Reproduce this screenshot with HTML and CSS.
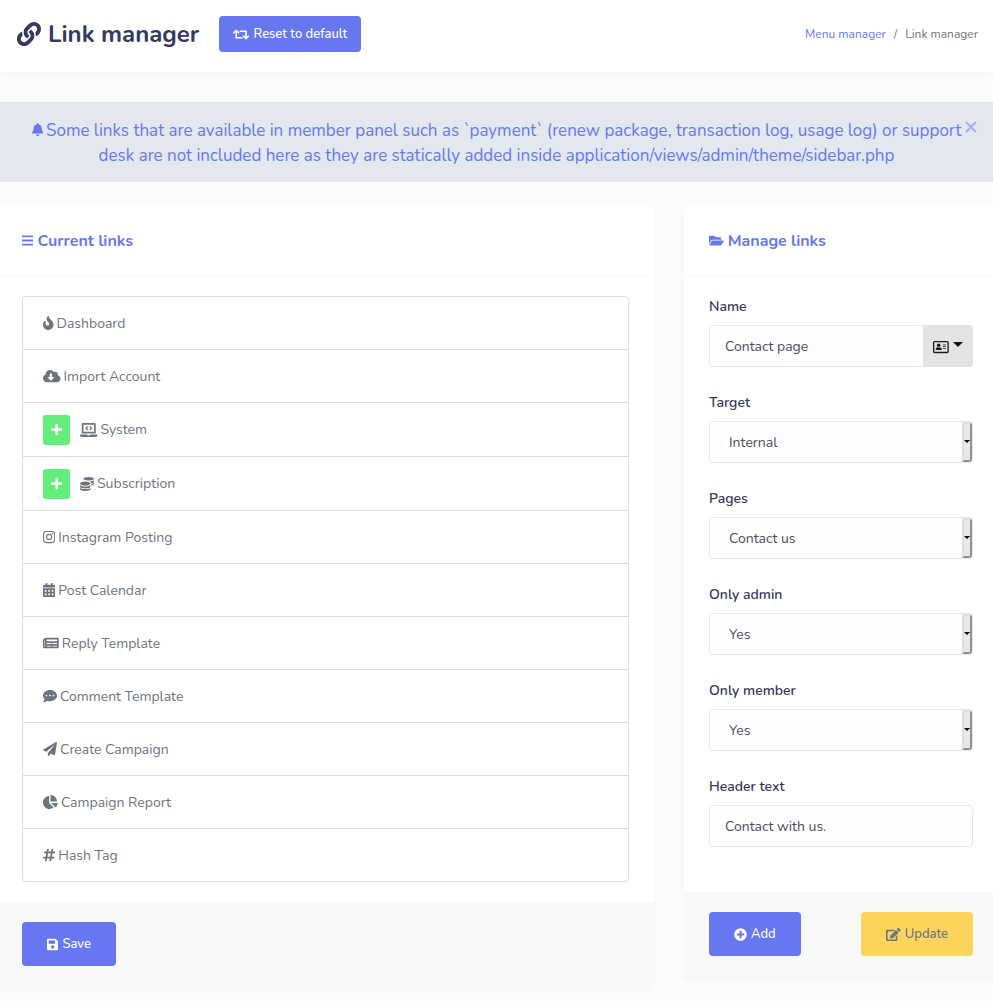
FILE: index.html
```html
<!DOCTYPE html>
<html lang="en">
<head>
<meta charset="utf-8">
<meta name="viewport" content="width=device-width, initial-scale=1">
<title>Link manager</title>
<link rel="stylesheet" href="styles.css">
</head>
<body>
<header class="page-header">
  <h1 class="page-title"><svg class="icon" viewBox="0 0 512 512" aria-hidden="true"><path d="M326.612 185.391c59.747 59.809 58.927 155.698.36 214.59-.11.12-.24.25-.36.37l-67.2 67.2c-59.27 59.27-155.699 59.262-214.96 0-59.27-59.26-59.27-155.7 0-214.96l37.106-37.106c9.84-9.84 26.786-3.3 27.294 10.606.648 17.722 3.826 35.527 9.69 52.721 1.986 5.822.567 12.262-3.783 16.612l-13.087 13.087c-28.026 28.026-28.905 73.66-1.155 101.96 28.024 28.579 74.086 28.749 102.325.51l67.2-67.19c28.191-28.191 28.073-73.757 0-101.83-3.701-3.694-7.429-6.564-10.341-8.569a16.037 16.037 0 0 1-6.947-12.606c-.396-10.567 3.348-21.456 11.698-29.806l21.054-21.055c5.521-5.521 14.182-6.199 20.584-1.731a152.482 152.482 0 0 1 20.522 17.197zM467.547 44.449c-59.261-59.262-155.69-59.27-214.96 0l-67.2 67.2c-.12.12-.25.25-.36.37-58.566 58.892-59.387 154.781.36 214.59a152.454 152.454 0 0 0 20.521 17.196c6.402 4.468 15.064 3.789 20.584-1.731l21.054-21.055c8.35-8.35 12.094-19.239 11.698-29.806a16.037 16.037 0 0 0-6.947-12.606c-2.912-2.005-6.64-4.875-10.341-8.569-28.073-28.073-28.191-73.639 0-101.83l67.2-67.19c28.239-28.239 74.3-28.069 102.325.51 27.75 28.3 26.872 73.934-1.155 101.96l-13.087 13.087c-4.35 4.35-5.769 10.79-3.783 16.612 5.864 17.194 9.042 34.999 9.69 52.721.509 13.906 17.454 20.446 27.294 10.606l37.106-37.106c59.271-59.259 59.271-155.699.001-214.959z"/></svg>Link manager</h1>
  <button class="btn btn-primary btn-reset" type="button"><svg class="icon" viewBox="0 0 640 512" aria-hidden="true"><path d="M629.657 343.598L528.971 444.284c-9.373 9.372-24.568 9.372-33.941 0L394.343 343.598c-9.373-9.373-9.373-24.569 0-33.941l10.823-10.823c9.562-9.562 25.133-9.34 34.419.492L480 342.118V160H292.451a24.005 24.005 0 0 1-16.971-7.029l-16-16C244.361 121.851 255.069 96 276.451 96H520c13.255 0 24 10.745 24 24v222.118l40.416-42.792c9.285-9.831 24.856-10.054 34.419-.492l10.823 10.823c9.372 9.372 9.372 24.569-.001 33.941zm-265.138 15.431A23.999 23.999 0 0 0 347.548 352H160V169.881l40.416 42.792c9.286 9.831 24.856 10.054 34.419.491l10.822-10.822c9.373-9.373 9.373-24.569 0-33.941L144.971 67.716c-9.373-9.373-24.569-9.373-33.941 0L10.343 168.402c-9.373 9.373-9.373 24.569 0 33.941l10.822 10.822c9.562 9.562 25.133 9.34 34.419-.491L96 169.881V392c0 13.255 10.745 24 24 24h243.549c21.382 0 32.09-25.851 16.971-40.971l-16.001-16z"/></svg>Reset to default</button>
  <nav class="breadcrumb" aria-label="Breadcrumb"><a href="#">Menu manager</a><span>/</span><span>Link manager</span></nav>
</header>

<main>
  <div class="alert" role="alert">
    <p class="alert-text"><svg class="icon" viewBox="0 0 448 512" aria-hidden="true"><path d="M224 512c35.32 0 63.97-28.65 63.97-64H160.03c0 35.35 28.65 64 63.97 64zm215.39-149.71c-19.32-20.76-55.47-51.99-55.47-154.29 0-77.7-54.48-139.9-127.94-155.16V32c0-17.67-14.32-32-31.98-32s-31.98 14.33-31.98 32v20.84C118.56 68.1 64.08 130.3 64.08 208c0 102.3-36.15 133.53-55.47 154.29-6 6.45-8.66 14.16-8.61 21.71.11 16.4 12.98 32 32.1 32h383.8c19.12 0 32-15.6 32.1-32 .05-7.55-2.61-15.27-8.61-21.71z"/></svg>Some links that are available in member panel such as `payment` (renew package, transaction log, usage log) or support desk are not included here as they are statically added inside application/views/admin/theme/sidebar.php</p>
    <button class="alert-close" type="button" aria-label="Close"><svg viewBox="0 0 12 12" aria-hidden="true"><path d="M1 1l10 10M11 1L1 11"/></svg></button>
  </div>

  <div class="columns">
    <section class="card">
      <h2 class="card-title"><svg class="icon" viewBox="0 0 448 512" aria-hidden="true"><path d="M16 132h416c9 0 16-7 16-16V76c0-9-7-16-16-16H16C7 60 0 67 0 76v40c0 9 7 16 16 16zm0 160h416c9 0 16-7 16-16v-40c0-9-7-16-16-16H16c-9 0-16 7-16 16v40c0 9 7 16 16 16zm0 160h416c9 0 16-7 16-16v-40c0-9-7-16-16-16H16c-9 0-16 7-16 16v40c0 9 7 16 16 16z"/></svg>Current links</h2>
      <div class="card-body">
        <ul class="links">
          <li><svg class="icon" viewBox="0 0 384 512" aria-hidden="true"><path d="M216 23.858c0-23.802-30.653-32.765-44.149-13.038C48 191.851 224 200 224 288c0 35.629-29.114 64.458-64.85 63.994C123.98 351.538 96 322.22 96 287.046v-85.51c0-21.703-26.471-32.225-41.432-16.504C27.801 213.158 0 261.332 0 320c0 105.869 86.131 192 192 192s192-86.131 192-192c0-170.29-168-193.003-168-296.142z"/></svg>Dashboard</li>
          <li><svg class="icon" viewBox="0 0 640 512" aria-hidden="true"><path d="M537.6 226.6c4.1-10.7 6.4-22.4 6.4-34.6 0-53-43-96-96-96-19.7 0-38.1 6-53.3 16.2C367 64.2 315.3 32 256 32c-88.4 0-160 71.6-160 160 0 2.7.1 5.4.2 8.1C40.2 219.8 0 273.2 0 336c0 79.5 64.5 144 144 144h368c70.7 0 128-57.3 128-128 0-61.9-44-113.6-102.4-125.4zm-132.9 88.7L299.3 420.7c-6.2 6.2-16.4 6.2-22.6 0L171.3 315.3c-10.1-10.1-2.9-27.3 11.3-27.3H248V176c0-8.8 7.2-16 16-16h48c8.8 0 16 7.2 16 16v112h65.4c14.2 0 21.4 17.2 11.3 27.3z"/></svg>Import Account</li>
          <li class="has-children"><button class="expand" type="button" aria-label="Expand System"><svg class="icon" viewBox="0 0 448 512" aria-hidden="true"><path d="M416 208H272V64c0-17.67-14.33-32-32-32h-32c-17.67 0-32 14.33-32 32v144H32c-17.67 0-32 14.33-32 32v32c0 17.67 14.33 32 32 32h144v144c0 17.67 14.33 32 32 32h32c17.67 0 32-14.33 32-32V304h144c17.67 0 32-14.33 32-32v-32c0-17.67-14.33-32-32-32z"/></svg></button><svg class="icon" viewBox="0 0 640 512" aria-hidden="true"><path d="M255.03 261.65c6.25 6.25 16.38 6.25 22.63 0l11.31-11.31c6.25-6.25 6.25-16.38 0-22.63L253.25 192l35.71-35.72c6.25-6.25 6.25-16.38 0-22.63l-11.31-11.31c-6.25-6.25-16.38-6.25-22.63 0l-58.34 58.34c-6.25 6.25-6.25 16.38 0 22.63l58.35 58.34zm96.01-11.3l11.31 11.31c6.25 6.25 16.38 6.25 22.63 0l58.34-58.34c6.25-6.25 6.25-16.38 0-22.63l-58.34-58.34c-6.25-6.25-16.38-6.25-22.63 0l-11.31 11.31c-6.25 6.25-6.25 16.38 0 22.63L386.75 192l-35.71 35.72c-6.25 6.25-6.25 16.38 0 22.63zM624 416H381.54c-.74 19.81-14.71 32-32.74 32H288c-18.69 0-33.02-17.47-32.77-32H16c-8.8 0-16 7.2-16 16v16c0 35.2 28.8 64 64 64h512c35.2 0 64-28.8 64-64v-16c0-8.8-7.2-16-16-16zM576 48c0-26.4-21.6-48-48-48H112C85.6 0 64 21.6 64 48v336h512V48zm-64 272H128V64h384v256z"/></svg>System</li>
          <li class="has-children"><button class="expand" type="button" aria-label="Expand Subscription"><svg class="icon" viewBox="0 0 448 512" aria-hidden="true"><path d="M416 208H272V64c0-17.67-14.33-32-32-32h-32c-17.67 0-32 14.33-32 32v144H32c-17.67 0-32 14.33-32 32v32c0 17.67 14.33 32 32 32h144v144c0 17.67 14.33 32 32 32h32c17.67 0 32-14.33 32-32V304h144c17.67 0 32-14.33 32-32v-32c0-17.67-14.33-32-32-32z"/></svg></button><svg class="icon" viewBox="0 0 512 512" aria-hidden="true"><path d="M0 405.3V448c0 35.3 86 64 192 64s192-28.7 192-64v-42.7C342.7 434.4 267.2 448 192 448S41.3 434.4 0 405.3zM320 128c106 0 192-28.7 192-64S426 0 320 0 128 28.7 128 64s86 64 192 64zM0 300.4V352c0 35.3 86 64 192 64s192-28.7 192-64v-51.6c-41.3 34-116.9 51.6-192 51.6S41.3 334.4 0 300.4zm416 11c57.3-11.1 96-31.7 96-55.4v-42.7c-23.2 16.4-57.3 27.6-96 34.5v63.6zM192 160C86 160 0 195.8 0 240s86 80 192 80 192-35.8 192-80-86-80-192-80zm219.3 56.3c60-10.8 100.7-32 100.7-56.3v-42.7c-35.5 25.1-96.5 38.6-160.7 41.8 29.5 14.3 51.2 33.5 60 57.2z"/></svg>Subscription</li>
          <li><svg class="icon" viewBox="0 0 448 512" aria-hidden="true"><rect x="20" y="52" width="408" height="408" rx="112" fill="none" stroke="currentColor" stroke-width="40"/><circle cx="224" cy="256" r="95" fill="none" stroke="currentColor" stroke-width="40"/><circle cx="344" cy="136" r="27"/></svg>Instagram Posting</li>
          <li><svg class="icon" viewBox="0 0 448 512" aria-hidden="true"><path fill-rule="evenodd" d="M0 464c0 26.5 21.5 48 48 48h352c26.5 0 48-21.5 48-48V192H0v272zM64 256h64v64H64zM192 256h64v64h-64zM320 256h64v64h-64zM64 384h64v64H64zM192 384h64v64h-64zM320 384h64v64h-64zM400 64h-48V16c0-8.8-7.2-16-16-16h-32c-8.8 0-16 7.2-16 16v48H160V16c0-8.8-7.2-16-16-16h-32c-8.8 0-16 7.2-16 16v48H48C21.5 64 0 85.5 0 112v48h448v-48c0-26.5-21.5-48-48-48z"/></svg>Post Calendar</li>
          <li><svg class="icon" viewBox="0 0 576 512" aria-hidden="true"><path fill-rule="evenodd" d="M552 64H88c-13.255 0-24 10.745-24 24v8H24c-13.255 0-24 10.745-24 24v272c0 30.928 25.072 56 56 56h472c26.51 0 48-21.49 48-48V88c0-13.255-10.745-24-24-24zM56 400a8 8 0 0 1-8-8V144h16v248a8 8 0 0 1-8 8zM128 352h176v32H128zM336 352h176v32H336zM128 256h176v32H128zM336 256h176v32H336zM128 128h384v64H128z"/></svg>Reply Template</li>
          <li><svg class="icon" viewBox="0 0 512 512" aria-hidden="true"><path d="M256 32C114.6 32 0 125.1 0 240c0 49.6 21.4 95 57 130.7C44.5 421.1 2.7 466 2.2 466.5c-2.2 2.3-2.8 5.7-1.5 8.7S4.8 480 8 480c66.3 0 116-31.8 140.6-51.4 32.7 12.3 69 19.4 107.4 19.4 141.4 0 256-93.1 256-208S397.4 32 256 32zM128 272c-17.7 0-32-14.3-32-32s14.3-32 32-32 32 14.3 32 32-14.3 32-32 32zm128 0c-17.7 0-32-14.3-32-32s14.3-32 32-32 32 14.3 32 32-14.3 32-32 32zm128 0c-17.7 0-32-14.3-32-32s14.3-32 32-32 32 14.3 32 32-14.3 32-32 32z"/></svg>Comment Template</li>
          <li><svg class="icon" viewBox="0 0 512 512" aria-hidden="true"><path d="M476 3.2L12.5 270.6c-18.1 10.4-15.8 35.6 2.2 43.2L121 358.4l287.3-253.2c5.5-4.9 13.3 2.6 8.6 8.3L176 407v80.5c0 23.6 28.5 32.9 42.5 15.8L282 426l124.6 52.2c14.2 6 30.4-2.9 33-18.2l72-432C515 7.8 493.3-6.8 476 3.2z"/></svg>Create Campaign</li>
          <li><svg class="icon" viewBox="0 0 544 512" aria-hidden="true"><path d="M527.79 288H290.5l158.03 158.03c6.04 6.04 15.98 6.53 22.19.68 38.7-36.46 65.32-85.61 73.13-140.86 1.34-9.46-6.51-17.85-16.06-17.85zm-15.83-64.8C503.72 103.74 408.26 8.28 288.8.04 279.68-.59 272 7.1 272 16.24V240h223.77c9.14 0 16.82-7.68 16.19-16.8zM224 288V50.71c0-9.55-8.39-17.4-17.84-16.06C86.99 51.49-4.1 155.6.14 280.37 4.5 408.51 114.83 513.59 243.03 511.98c50.4-.63 96.97-16.87 135.26-44.03 7.9-5.6 8.42-17.23 1.57-24.08L224 288z"/></svg>Campaign Report</li>
          <li><svg class="icon" viewBox="0 0 448 512" aria-hidden="true"><path d="M440.667 182.109l7.143-40c1.313-7.355-4.342-14.109-11.813-14.109h-74.81l14.623-81.891C377.123 38.754 371.468 32 363.997 32h-40.632a12 12 0 0 0-11.813 9.891L296.175 128H197.54l14.623-81.891C213.477 38.754 207.822 32 200.35 32h-40.632a12 12 0 0 0-11.813 9.891L132.528 128H53.432a12 12 0 0 0-11.813 9.891l-7.143 40C33.163 185.246 38.818 192 46.289 192h74.81L98.242 320H19.146a12 12 0 0 0-11.813 9.891l-7.143 40C-1.123 377.246 4.532 384 12.003 384h74.81L72.19 465.891C70.877 473.246 76.532 480 84.003 480h40.632a12 12 0 0 0 11.813-9.891L151.826 384h98.634l-14.623 81.891C234.523 473.246 240.178 480 247.65 480h40.632a12 12 0 0 0 11.813-9.891L315.472 384h79.096a12 12 0 0 0 11.813-9.891l7.143-40c1.313-7.355-4.342-14.109-11.813-14.109h-74.81l22.857-128h79.096a12 12 0 0 0 11.813-9.891zM261.889 320h-98.634l22.857-128h98.634l-22.857 128z"/></svg>Hash Tag</li>
        </ul>
      </div>
      <footer class="card-footer">
        <button class="btn btn-primary" type="button"><svg class="icon" viewBox="0 0 448 512" aria-hidden="true"><path d="M433.941 129.941l-83.882-83.882A48 48 0 0 0 316.118 32H48C21.49 32 0 53.49 0 80v352c0 26.51 21.49 48 48 48h352c26.51 0 48-21.49 48-48V163.882a48 48 0 0 0-14.059-33.941zM224 416c-35.346 0-64-28.654-64-64 0-35.346 28.654-64 64-64s64 28.654 64 64c0 35.346-28.654 64-64 64zm96-304.52V212c0 6.627-5.373 12-12 12H76c-6.627 0-12-5.373-12-12V108c0-6.627 5.373-12 12-12h228.52c3.183 0 6.235 1.264 8.485 3.515l3.48 3.48A11.996 11.996 0 0 1 320 111.48z"/></svg>Save</button>
      </footer>
    </section>

    <form class="card">
      <h2 class="card-title"><svg class="icon" viewBox="0 0 576 512" aria-hidden="true"><path d="M572.694 292.093L500.27 416.248A63.997 63.997 0 0 1 444.989 448H45.025c-18.523 0-30.064-20.093-20.731-36.093l72.424-124.155A64 64 0 0 1 152 256h399.964c18.523 0 30.064 20.093 20.73 36.093zM152 224h328v-48c0-26.51-21.49-48-48-48H272l-64-64H48C21.49 64 0 85.49 0 112v278.046l69.077-118.418C86.214 242.25 117.989 224 152 224z"/></svg>Manage links</h2>
      <div class="card-body">
        <div class="field">
          <label for="name">Name</label>
          <div class="input-group">
            <input class="control" id="name" type="text" value="Contact page">
            <button class="picker" type="button" aria-label="Choose icon"><svg class="icon" viewBox="0 0 576 512" aria-hidden="true"><rect x="24" y="56" width="528" height="400" rx="32" fill="none" stroke="currentColor" stroke-width="48"/><circle cx="208" cy="192" r="64"/><path d="M96 345c0-48 30-77 67-77 30 12 60 12 90 0 37 0 67 29 67 77 0 14-10 23-22 23H118c-12 0-22-9-22-23zM360 160h112v32H360zM360 224h112v32H360zM360 288h112v32H360z"/></svg><span class="caret"></span></button>
          </div>
        </div>
        <div class="field">
          <label for="target">Target</label>
          <div class="select"><select class="control" id="target"><option>Internal</option><option>External</option></select></div>
        </div>
        <div class="field">
          <label for="pages">Pages</label>
          <div class="select"><select class="control" id="pages"><option>Contact us</option></select></div>
        </div>
        <div class="field">
          <label for="only-admin">Only admin</label>
          <div class="select"><select class="control" id="only-admin"><option>Yes</option><option>No</option></select></div>
        </div>
        <div class="field">
          <label for="only-member">Only member</label>
          <div class="select"><select class="control" id="only-member"><option>Yes</option><option>No</option></select></div>
        </div>
        <div class="field">
          <label for="header-text">Header text</label>
          <input class="control" id="header-text" type="text" value="Contact with us.">
        </div>
      </div>
      <footer class="card-footer">
        <button class="btn btn-primary" type="button"><svg class="icon" viewBox="0 0 512 512" aria-hidden="true"><path fill-rule="evenodd" d="M256 8a248 248 0 1 0 0 496 248 248 0 0 0 0-496zM216 112h80v104h104v80H296v104h-80V296H112v-80h104z"/></svg>Add</button>
        <button class="btn btn-warning" type="button"><svg class="icon" viewBox="0 0 576 512" aria-hidden="true"><path d="M402.6 83.2l90.2 90.2c3.8 3.8 3.8 10 0 13.8L274.4 405.6l-92.8 10.3c-12.4 1.4-22.9-9.1-21.5-21.5l10.3-92.8L388.8 83.2c3.8-3.8 10-3.8 13.8 0zm162-22.9l-48.8-48.8c-15.2-15.2-39.9-15.2-55.2 0l-35.4 35.4c-3.8 3.8-3.8 10 0 13.8l90.2 90.2c3.8 3.8 10 3.8 13.8 0l35.4-35.4c15.2-15.3 15.2-40 0-55.2zM384 346.2V448H64V128h229.8c3.2 0 6.2-1.3 8.5-3.5l40-40c7.6-7.6 2.2-20.5-8.5-20.5H48C21.5 64 0 85.5 0 112v352c0 26.5 21.5 48 48 48h352c26.5 0 48-21.5 48-48V306.2c0-10.7-12.9-16-20.5-8.5l-40 40c-2.2 2.3-3.5 5.3-3.5 8.5z"/></svg>Update</button>
      </footer>
    </form>
  </div>
</main>
</body>
</html>
```
FILE: styles.css
```css
*,
*::before,
*::after {
  box-sizing: border-box;
}

body {
  margin: 0;
  overflow-x: hidden;
  background: #fbfdfc;
  color: #6c757d;
  font: 14px/21px Nunito, Lato, "Open Sans", sans-serif;
}

h1, h2, p, ul {
  margin: 0;
  padding: 0;
}

button, input, select {
  font: inherit;
}

.icon {
  display: inline-block;
  flex: none;
  height: 1em;
  width: auto;
  fill: currentColor;
}

.page-header {
  display: flex;
  align-items: center;
  height: 72px;
  padding: 0 15px 4px 17px;
  background: #fff;
  box-shadow: 0 4px 8px rgba(0, 0, 0, .03);
}

.page-title {
  display: flex;
  align-items: center;
  gap: 7px;
  color: #34395e;
  font-size: 24px;
  line-height: 36px;
  font-weight: 700;
}

.btn {
  display: inline-flex;
  align-items: center;
  justify-content: center;
  gap: 4px;
  height: 44px;
  padding: 0 25px;
  border: 0;
  border-radius: 4px;
  font-size: 13px;
  font-weight: 500;
  cursor: pointer;
}

.btn-primary {
  background: #6777ef;
  color: #fff;
}

.btn-warning {
  background: #fcd45c;
  color: #6c757d;
}

.btn-reset {
  height: 36px;
  margin-left: 20px;
  padding: 0 14px;
}

.breadcrumb {
  display: flex;
  gap: 8px;
  margin-left: auto;
  font-size: 12px;
}

.breadcrumb a {
  color: #6777ef;
  text-decoration: none;
}

.alert {
  position: relative;
  margin-top: 30px;
  padding: 16px 25px 14px;
  background: #e3e8ee;
  color: #6777ef;
}

.alert-text {
  font-size: 17px;
  line-height: 25px;
  text-align: center;
}

.alert-text .icon {
  height: 13px;
  margin-right: 3px;
}

.alert-close {
  position: absolute;
  top: 14px;
  right: 11px;
  display: flex;
  align-items: center;
  justify-content: center;
  width: 22px;
  height: 22px;
  padding: 0;
  border: 0;
  background: none;
  color: inherit;
  opacity: .5;
}

.alert-close svg {
  width: 12px;
  height: 12px;
  fill: none;
  stroke: currentColor;
  stroke-width: 2;
}

.columns {
  display: grid;
  grid-template-columns: 657fr 314fr;
  align-items: start;
  gap: 30px;
  margin: 24px -5px 0 -3px;
  padding-bottom: 14px;
}

.card {
  min-width: 0;
  background: #fff;
  border-radius: 3px;
  box-shadow: 0 4px 8px rgba(0, 0, 0, .03);
}

.card-title {
  display: flex;
  align-items: center;
  gap: 4px;
  height: 70px;
  padding: 0 25px;
  border-bottom: 1px solid #f9f9f9;
  color: #6777ef;
  font-size: 16px;
  line-height: 28px;
  font-weight: 700;
}

.card-title .icon {
  font-size: 13px;
}

.card-body {
  padding: 20px 25px;
}

.links {
  border: 1px solid #dcdfe1;
  border-radius: 4px;
  list-style: none;
}

.links li {
  display: flex;
  align-items: center;
  gap: 3px;
  height: 53px;
  padding: 0 20px;
}

.links li:first-child {
  height: 52px;
}

.links li + li {
  border-top: 1px solid #dcdfe1;
}

.links .has-children {
  height: 54px;
}

.expand {
  display: flex;
  align-items: center;
  justify-content: center;
  width: 27px;
  height: 30px;
  margin-right: 7px;
  padding: 0;
  border: 0;
  border-radius: 3px;
  background: #63ed7a;
  color: #fff;
  font-size: 13px;
}

.card-footer {
  display: flex;
  justify-content: space-between;
  padding: 20px 25px;
  border-radius: 0 0 3px 3px;
  background: #f7f9f9;
}

.field {
  padding-bottom: 25px;
}

.field label {
  display: block;
  height: 21px;
  margin-bottom: 8px;
  color: #34395e;
  font-weight: 600;
}

.control {
  display: block;
  width: 100%;
  min-width: 0;
  height: 42px;
  padding: 0 15px;
  border: 1px solid #e4e6fc;
  border-radius: 4px;
  background: #fdfdff;
  color: #495057;
}

.input-group {
  display: flex;
}

.input-group .control {
  flex: 1;
  border-right: 0;
  border-radius: 4px 0 0 4px;
}

.picker {
  display: flex;
  align-items: center;
  gap: 4px;
  padding: 2px 10px 0;
  border: 0;
  border-radius: 0 4px 4px 0;
  background: #e3e3e3;
  color: #191d21;
}

.caret {
  margin-bottom: 5px;
  border: 5px solid transparent;
  border-top-color: #111;
  border-bottom: 0;
}

.select {
  position: relative;
}

.select .control {
  appearance: none;
  padding-left: 19px;
}

.select::before,
.select::after {
  position: absolute;
  content: "";
  pointer-events: none;
}

.select::before {
  top: 1px;
  right: 1px;
  bottom: 1px;
  width: 10px;
  border: 2px solid;
  border-color: #dedede #919191 #919191 #dedede;
  border-radius: 0 3px 3px 0;
  background: #e8e8e8;
}

.select::after {
  top: 19px;
  right: 3px;
  border: 3px solid transparent;
  border-top-color: #000;
  border-bottom: 0;
}
```
